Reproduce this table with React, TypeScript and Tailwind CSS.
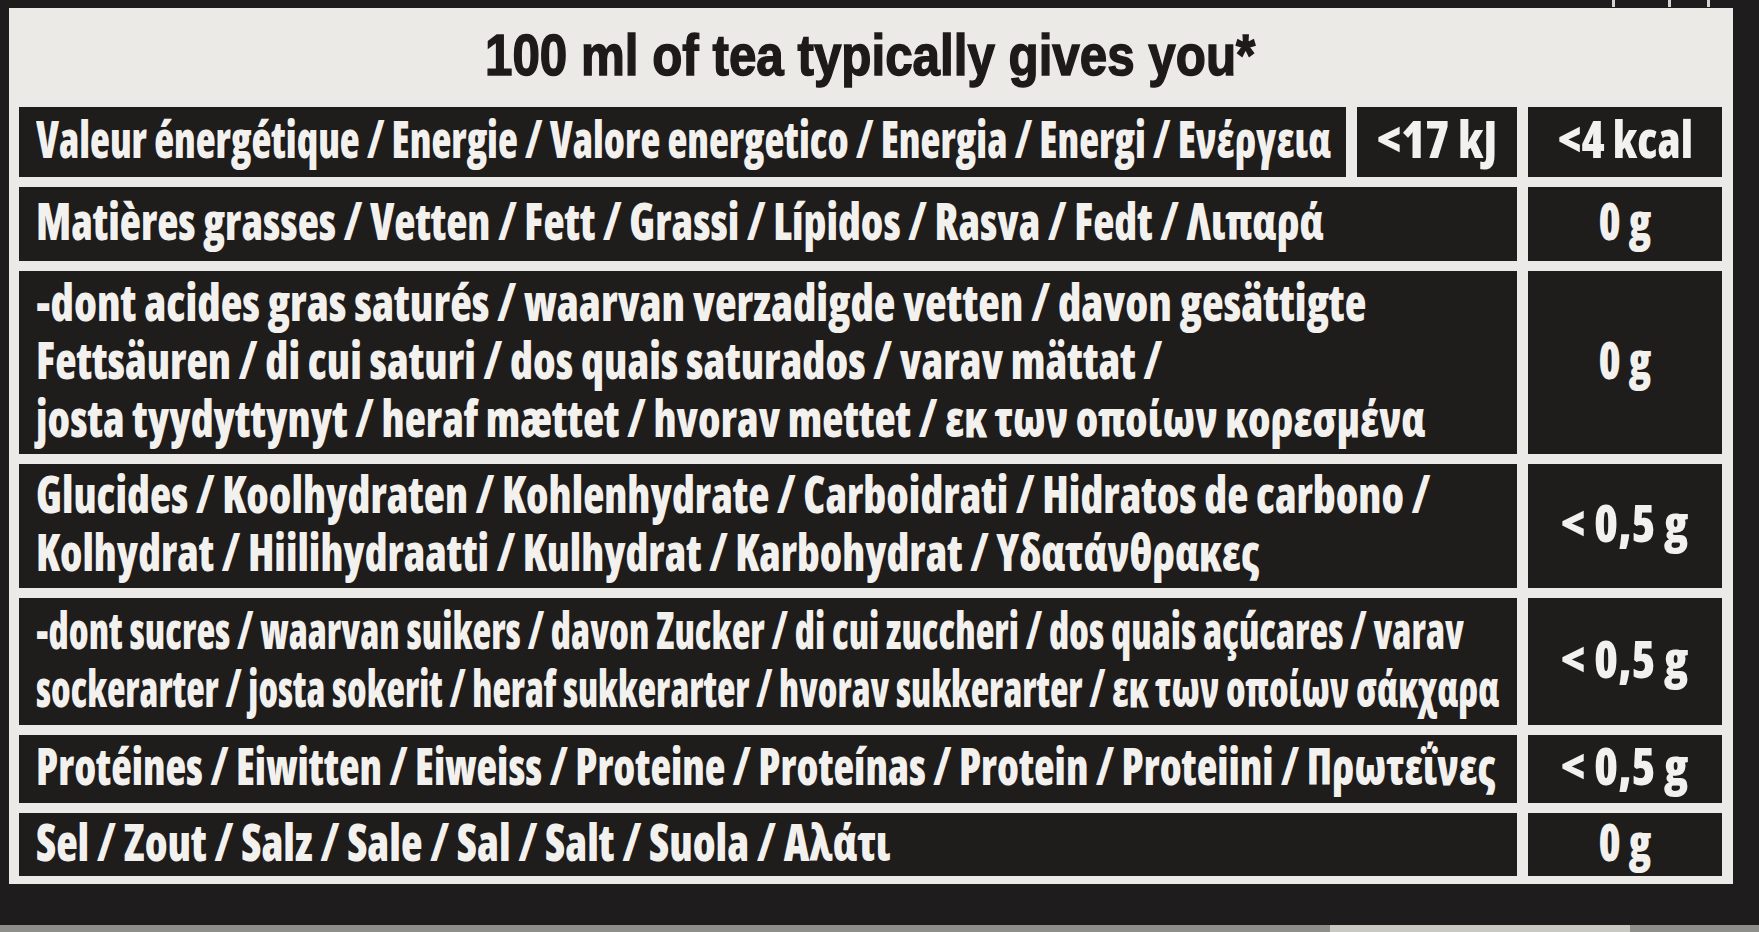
import { useLayoutEffect, useRef, useState, type ReactNode } from "react";
import clsx from "clsx";

// squeezes a single line of text horizontally so it takes the width seen on the label
function Fit({ w, className, children }: { w: number; className?: string; children: ReactNode }) {
  const ref = useRef<HTMLSpanElement>(null);
  const [scale, setScale] = useState(1);

  useLayoutEffect(() => {
    const measure = () => {
      if (ref.current && ref.current.offsetWidth > 0) setScale(w / ref.current.offsetWidth);
    };
    measure();
    document.fonts?.ready.then(measure);
  }, [w]);

  return (
    <span
      ref={ref}
      className={clsx("inline-block whitespace-nowrap", className)}
      style={{ transform: `scaleX(${scale})` }}
    >
      {children}
    </span>
  );
}

type Row = {
  h: string;
  lines: [string, number][];
  value: [string, number];
};

const rows: Row[] = [
  {
    h: "h-[74px]",
    lines: [["Matières grasses / Vetten / Fett / Grassi / Lípidos / Rasva / Fedt / Λιπαρά", 1288]],
    value: ["0 g", 53],
  },
  {
    h: "h-[183px]",
    lines: [
      ["-dont acides gras saturés / waarvan verzadigde vetten / davon gesättigte", 1330],
      ["Fettsäuren / di cui saturi / dos quais saturados / varav mättat /", 1126],
      ["josta tyydyttynyt / heraf mættet / hvorav mettet / εκ των οποίων κορεσμένα", 1390],
    ],
    value: ["0 g", 53],
  },
  {
    h: "h-[124px]",
    lines: [
      ["Glucides / Koolhydraten / Kohlenhydrate / Carboidrati / Hidratos de carbono /", 1394],
      ["Kolhydrat / Hiilihydraatti / Kulhydrat / Karbohydrat / Υδατάνθρακες", 1224],
    ],
    value: ["< 0,5 g", 127],
  },
  {
    h: "h-[127px]",
    lines: [
      ["-dont sucres / waarvan suikers / davon Zucker / di cui zuccheri / dos quais açúcares / varav", 1428],
      ["sockerarter / josta sokerit / heraf sukkerarter / hvorav sukkerarter / εκ των οποίων σάκχαρα", 1463],
    ],
    value: ["< 0,5 g", 127],
  },
  {
    h: "h-[68px]",
    lines: [["Protéines / Eiwitten / Eiweiss / Proteine / Proteínas / Protein / Proteiini / Πρωτεΐνες", 1460]],
    value: ["< 0,5 g", 127],
  },
  {
    h: "h-[63px]",
    lines: [["Sel / Zout / Salz / Sale / Sal / Salt / Suola / Αλάτι", 855]],
    value: ["0 g", 53],
  },
];

const cell = "bg-[#1f1c1c] pb-[8px]";

function Value({ text, w, width }: { text: string; w: number; width: string }) {
  return (
    <div className={clsx(cell, width, "flex shrink-0 items-center justify-center")}>
      <div className="h-[58px] leading-[58px]">
        <Fit w={w} className="origin-center">
          {text}
        </Fit>
      </div>
    </div>
  );
}

function Label({ lines }: { lines: [string, number][] }) {
  return (
    <div className={clsx(cell, "flex min-w-0 flex-1 flex-col justify-center pl-[17px]")}>
      {lines.map(([text, w]) => (
        <div key={text} className="h-[58px] leading-[58px]">
          <Fit w={w} className="origin-left">
            {text}
          </Fit>
        </div>
      ))}
    </div>
  );
}

export default function App() {
  return (
    <div className="flex h-[932px] w-[1759px] flex-col overflow-hidden bg-[#1e1c1c]">
      {/* bits of the print above the panel */}
      <div className="flex h-[8px] shrink-0 items-start">
        <div className="ml-[1612px] h-[7px] w-[3px] bg-[#d6d4d0]" />
        <div className="ml-[53px] h-[7px] w-[3px] bg-[#d6d4d0]" />
        <div className="ml-[36px] h-[7px] w-[3px] bg-[#d6d4d0]" />
      </div>

      <div className="ml-[9px] flex h-[876px] w-[1724px] shrink-0 flex-col bg-[#ebeae6] pb-[8px] pl-[10px] pr-[11px]">
        <div className="flex h-[99px] shrink-0 items-center justify-center pb-[4px] font-['Liberation_Sans',Arial,sans-serif] text-[57px] font-bold leading-none text-[#1d1a19] [-webkit-text-stroke:1.5px_#1d1a19]">
          <Fit w={770} className="origin-center">
            100 ml of tea typically gives you*
          </Fit>
        </div>

        <div className="flex flex-col gap-[10px] font-['Open_Sans','Noto_Sans',sans-serif] text-[51px] font-extrabold text-[#f3f1ee] [font-stretch:75%]">
          <div className="flex h-[70px] gap-[11px]">
            <Label lines={[["Valeur énergétique / Energie / Valore energetico / Energia / Energi / Ενέργεια", 1295]]} />
            <Value text="<17 kJ" w={120} width="w-[160px]" />
            <Value text="<4 kcal" w={135} width="w-[194px]" />
          </div>

          {rows.map((row) => (
            <div key={row.lines[0][0]} className={clsx("flex gap-[11px]", row.h)}>
              <Label lines={row.lines} />
              <Value text={row.value[0]} w={row.value[1]} width="w-[194px]" />
            </div>
          ))}
        </div>
      </div>

      <div className="flex-1" />
      <div className="flex h-[7px] shrink-0 bg-[#8e8e8b]">
        <div className="ml-[1330px] w-[300px] bg-[#c9c9c4]" />
      </div>
    </div>
  );
}
